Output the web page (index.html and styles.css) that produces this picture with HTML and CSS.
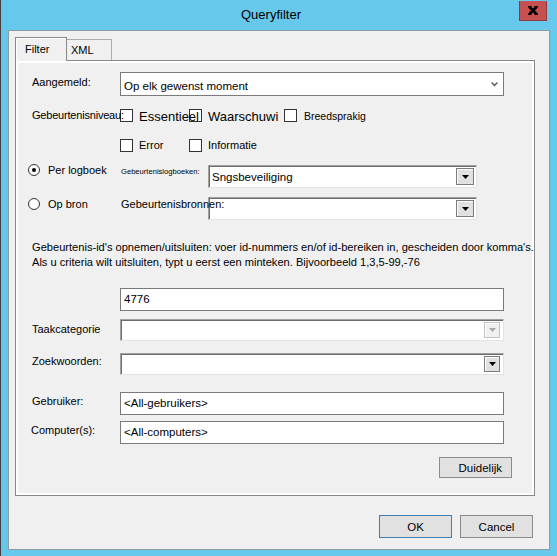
FILE: index.html
```html
<!DOCTYPE html>
<html lang="nl">
<head>
<meta charset="utf-8">
<title>Queryfilter</title>
<link rel="stylesheet" href="styles.css">
</head>
<body>
<div class="window">
  <div class="titlebar">
    <span class="title">Queryfilter</span>
    <div class="close">
      <svg width="10" height="9" viewBox="0 0 10 9"><path d="M1.5 1 L8.5 8 M8.5 1 L1.5 8" stroke="#000" stroke-width="2.6" fill="none"/><path d="M0 0.8 H3.5 M6.5 0.8 H10 M0 8.2 H3.5 M6.5 8.2 H10" stroke="#000" stroke-width="1.4"/></svg>
    </div>
  </div>
  <div class="client">
    <div class="tabs">
      <div class="tab tab-active">Filter</div>
      <div class="tab tab-xml">XML</div>
    </div>
    <div class="panel">
      <div class="row r-aangemeld">
        <span class="label lh20">Aangemeld:</span>
        <div class="combo-modern">
          <span>Op elk gewenst moment</span>
          <svg width="7" height="5" viewBox="0 0 7 5"><path d="M0.6 0.6 L3.5 3.6 L6.4 0.6" fill="none" stroke="#555" stroke-width="1.4"/></svg>
        </div>
      </div>
      <div class="row r-lvl1">
        <span class="label over">Gebeurtenisniveau:</span>
        <div class="check w69"><span class="box"></span><span class="big over">Essentieel</span></div>
        <div class="check w95"><span class="box"></span><span class="big">Waarschuwi</span></div>
        <div class="check gap7"><span class="box"></span><span class="small">Breedsprakig</span></div>
      </div>
      <div class="row r-lvl2">
        <span class="label"></span>
        <div class="check w69"><span class="box"></span><span>Error</span></div>
        <div class="check"><span class="box"></span><span>Informatie</span></div>
      </div>
      <div class="row r-log">
        <div class="radio-item h12"><span class="radio on"></span><span>Per logboek</span></div>
        <span class="sublabel tiny">Gebeurtenislogboeken:</span>
        <div class="combo-sunk wide mt1">
          <span class="ctext">Sngsbeveiliging</span>
          <span class="dd"><svg width="7" height="4" viewBox="0 0 7 4"><path d="M0 0H7L3.5 4Z" fill="#000"/></svg></span>
        </div>
      </div>
      <div class="row r-src">
        <div class="radio-item h14"><span class="radio"></span><span>Op bron</span></div>
        <span class="sublabel lh14 over">Gebeurtenisbronnen:</span>
        <div class="combo-sunk wide">
          <span class="ctext"></span>
          <span class="dd"><svg width="7" height="4" viewBox="0 0 7 4"><path d="M0 0H7L3.5 4Z" fill="#000"/></svg></span>
        </div>
      </div>
      <div class="desc">
        <span class="line">Gebeurtenis-id's opnemen/uitsluiten: voer id-nummers en/of id-bereiken in, gescheiden door komma's.</span>
        <span class="line">Als u criteria wilt uitsluiten, typt u eerst een minteken. Bijvoorbeeld 1,3,5-99,-76</span>
      </div>
      <div class="row r-id">
        <span class="label"></span>
        <div class="field">4776</div>
      </div>
      <div class="row r-taak">
        <span class="label lh20">Taakcategorie</span>
        <div class="combo-sunk full">
          <span class="ctext"></span>
          <span class="dd dd-small dd-disabled"><svg width="7" height="4" viewBox="0 0 7 4"><path d="M0 0H7L3.5 4Z" fill="#a6a6a6"/></svg></span>
        </div>
      </div>
      <div class="row r-zoek">
        <span class="label lh16">Zoekwoorden:</span>
        <div class="combo-sunk full">
          <span class="ctext"></span>
          <span class="dd dd-small"><svg width="7" height="4" viewBox="0 0 7 4"><path d="M0 0H7L3.5 4Z" fill="#000"/></svg></span>
        </div>
      </div>
      <div class="row r-user">
        <span class="label lh18">Gebruiker:</span>
        <div class="field">&lt;All-gebruikers&gt;</div>
      </div>
      <div class="row r-comp">
        <span class="label lh18 shift">Computer(s):</span>
        <div class="field">&lt;All-computers&gt;</div>
      </div>
      <div class="row r-clear">
        <div class="btn btn-clear">Duidelijk</div>
      </div>
    </div>
    <div class="footer">
      <div class="btn btn-default">OK</div>
      <div class="btn">Cancel</div>
    </div>
  </div>
</div>
</body>
</html>
```

FILE: styles.css
```css
* { box-sizing: border-box; margin: 0; padding: 0; }
html, body { width: 557px; height: 556px; overflow: hidden; }
body {
  font-family: "Liberation Sans", Arial, sans-serif;
  font-size: 11px;
  color: #000;
  background: #66c8ea;
}
.window {
  width: 557px;
  height: 556px;
  background: #66c8ea;
  border-left: 1px solid #3f3f3f;
  padding: 0 7px 6px 7px;
  display: flex;
  flex-direction: column;
}
.titlebar {
  height: 30px;
  flex: none;
  display: flex;
  align-items: flex-start;
}
.title {
  margin-left: 233px;
  line-height: 30px;
  font-size: 13px;
}
.close {
  margin-left: auto;
  margin-right: 3px;
  margin-top: 1px;
  width: 28px;
  height: 20px;
  background: #c75050;
  border: 1px solid #8e3a3a;
  border-top: none;
  display: flex;
  align-items: center;
  justify-content: center;
}
.client {
  flex: 1;
  background: #f0f0f0;
  border: 1px solid #8f9aa3;
  padding: 6px 14px 0 6px;
  display: flex;
  flex-direction: column;
}
.tabs {
  height: 23px;
  flex: none;
  display: flex;
  align-items: flex-end;
}
.tab {
  background: #f0f0f0;
  border: 1px solid #acacac;
  border-bottom: none;
}
.tab-active {
  width: 52px;
  height: 24px;
  margin-bottom: -1px;
  padding-left: 9px;
  line-height: 23px;
  border-color: #898989;
  box-shadow: inset 1px 1px 0 #fff;
  position: relative;
  z-index: 2;
}
.tab-xml {
  width: 46px;
  height: 21px;
  margin-left: -1px;
  padding-left: 4px;
  line-height: 21px;
}
.panel {
  height: 436px;
  flex: none;
  border: 1px solid #898989;
  box-shadow: inset 0 0 0 2px #fff;
  padding: 11px 0 0 16px;
  display: flex;
  flex-direction: column;
}
.row {
  display: flex;
  align-items: flex-start;
  flex: none;
  white-space: nowrap;
}
.label {
  width: 88px;
  flex: none;
  white-space: nowrap;
}
.lh14 { line-height: 14px; }
.lh16 { line-height: 16px; }
.lh18 { line-height: 18px; }
.lh20 { line-height: 20px; }
.shift { margin-left: -1px; margin-right: 1px; }
.over { position: relative; z-index: 1; }

.r-aangemeld { height: 24px; }
.r-lvl1 { height: 16px; margin-top: 11px; align-items: center; }
.r-lvl2 { height: 16px; margin-top: 14px; align-items: center; }
.r-log { height: 24px; margin-top: 11px; }
.r-src { height: 23px; margin-top: 9px; }
.r-id { height: 23px; margin-top: 18px; }
.r-taak { height: 22px; margin-top: 8px; }
.r-zoek { height: 22px; margin-top: 12px; }
.r-user { height: 23px; margin-top: 17px; }
.r-comp { height: 23px; margin-top: 6px; }
.r-clear { height: 21px; margin-top: 13px; }

.r-lvl1 .label { line-height: 16px; margin-top: -1px; letter-spacing: -0.2px; }

.combo-modern {
  width: 384px;
  height: 24px;
  border: 1px solid #7a7a7a;
  background: #fff;
  padding: 0 5px 0 3px;
  display: flex;
  align-items: center;
  justify-content: space-between;
  font-size: 11.5px;
}
.combo-modern span { padding-top: 3px; }

.check {
  display: flex;
  align-items: center;
  gap: 6px;
  flex: none;
  line-height: 16px;
}
.gap7 { gap: 7px; }
.w69 { width: 69px; }
.w95 { width: 95px; }
.box {
  width: 13px;
  height: 13px;
  flex: none;
  border: 1px solid #333;
  background: #fff;
}
.big { font-size: 13px; padding-top: 3px; }
.small { font-size: 10.5px; padding-top: 2px; }

.radio-item {
  width: 92px;
  margin-left: -4px;
  flex: none;
  display: flex;
  align-items: center;
  gap: 8px;
}
.h12 { height: 12px; }
.h14 { height: 14px; }
.radio {
  width: 12px;
  height: 12px;
  flex: none;
  border: 1px solid #333;
  border-radius: 50%;
  background: #fff;
  display: flex;
  align-items: center;
  justify-content: center;
}
.radio.on::after {
  content: "";
  width: 4px;
  height: 4px;
  border-radius: 50%;
  background: #000;
}
.sublabel {
  width: 88px;
  flex: none;
  padding-left: 1px;
  white-space: nowrap;
}
.tiny { font-size: 7.6px; line-height: 16px; }
.mt1 { margin-top: 1px; }

.combo-sunk {
  height: 23px;
  border: 1px solid;
  border-color: #a0a0a0 #e3e3e3 #e3e3e3 #a0a0a0;
  box-shadow: inset 1px 1px 0 #6d6d6d;
  background: #fff;
  padding: 2px 2px 2px 2px;
  display: flex;
  align-items: center;
  justify-content: space-between;
  flex: none;
}
.combo-sunk.wide { width: 269px; }
.combo-sunk.full { width: 384px; height: 22px; padding-right: 3px; }
.ctext { padding-left: 1px; font-size: 11.5px; }
.dd {
  width: 18px;
  height: 17px;
  flex: none;
  background: #e1e1e1;
  border: 1px solid #7b7b7b;
  box-shadow: inset 1px 1px 0 #fff;
  display: flex;
  align-items: center;
  justify-content: center;
}
.dd-small { width: 16px; height: 16px; }
.dd-disabled { border-color: #c2c2c2; background: #f0f0f0; }

.desc {
  margin-top: 20px;
  height: 30px;
  line-height: 15px;
  font-size: 11.1px;
  white-space: nowrap;
  flex: none;
}
.desc .line { display: block; }

.field {
  width: 384px;
  height: 23px;
  border: 1px solid #7a7a7a;
  background: #fff;
  padding-left: 3px;
  line-height: 21px;
  font-size: 11.5px;
}

.btn {
  width: 73px;
  height: 23px;
  background: #e1e1e1;
  border: 1px solid #8c8c8c;
  display: flex;
  align-items: center;
  justify-content: center;
  font-size: 11.5px;
}
.btn-clear {
  height: 21px;
  margin-left: 407px;
  justify-content: flex-end;
  padding-right: 9px;
}
.btn-default { border-color: #3c7fb1; }
.footer {
  margin-top: 19px;
  margin-right: 2px;
  display: flex;
  justify-content: flex-end;
  gap: 8px;
  flex: none;
}
```
